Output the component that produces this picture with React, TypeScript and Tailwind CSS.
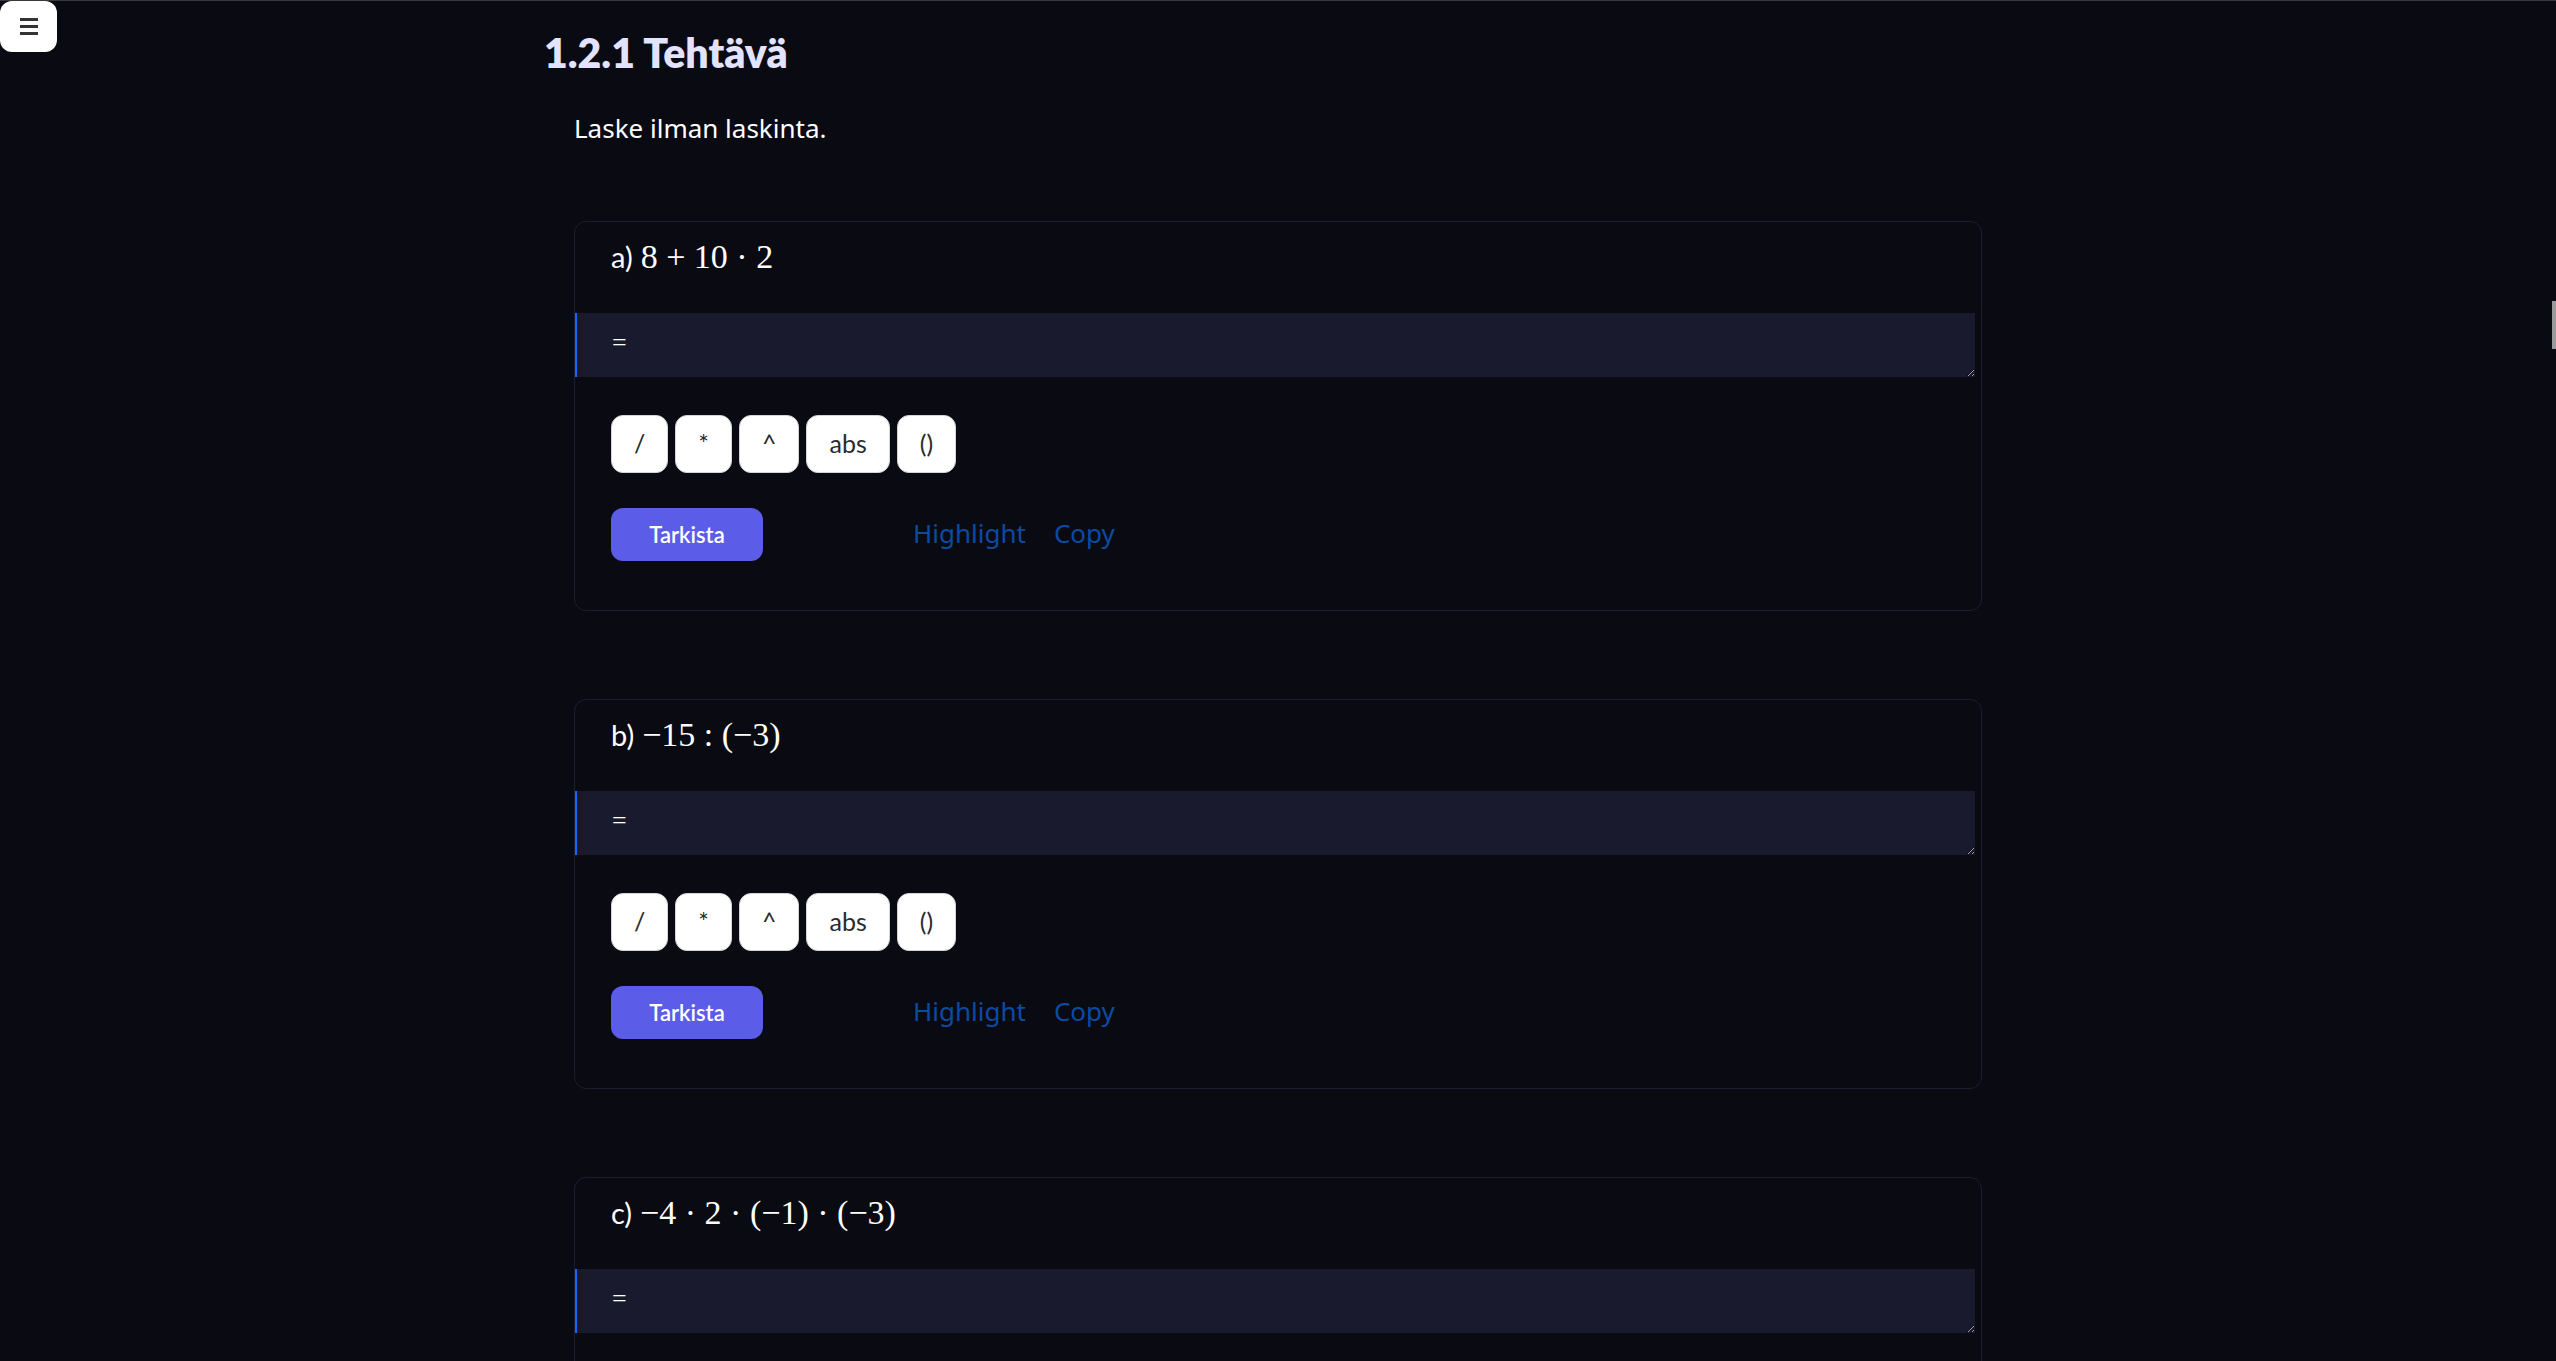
import React from "react";

// ยกเมนูไว้มุมซ้ายบน ลอยทับเนื้อหา
const MenuButton: React.FC = () => (
  <button className="absolute left-0 top-0 flex h-[51px] w-[57px] items-center justify-center rounded-[12px] bg-white">
    <svg width="18" height="18" viewBox="0 0 18 18" fill="#333">
      <rect x="0" y="0" width="18" height="3" />
      <rect x="0" y="7" width="18" height="3" />
      <rect x="0" y="14" width="18" height="3" />
    </svg>
  </button>
);

const keys = ["/", "*", "^", "abs", "()"];

type Task = { label: string; expr: string };

const tasks: Task[] = [
  { label: "a)", expr: "8 + 10 · 2" },
  { label: "b)", expr: "−15 : (−3)" },
  { label: "c)", expr: "−4 · 2 · (−1) · (−3)" },
];

const TaskCard: React.FC<{ task: Task }> = ({ task }) => (
  <div className="mb-[88px] rounded-[12px] border border-[#1d1d30] bg-[#0a0a13]">
    {/* label + expression */}
    <div className="flex items-baseline gap-[8px] pl-[36px] pt-[13px] leading-[44px]">
      <span className="font-['Lato',sans-serif] text-[29px] text-white">
        {task.label}
      </span>
      <span className="font-['Liberation_Serif',serif] text-[34px] text-white">
        {task.expr}
      </span>
    </div>

    {/* answer field */}
    <textarea
      placeholder="="
      className="mt-[34px] block h-[64px] w-[calc(100%-6px)] border-l-2 border-[#1565ff] bg-[#1a1a2e] pl-[35px] pt-[17px] font-['Liberation_Serif',serif] text-[26px] leading-[26px] text-white placeholder:text-white focus:outline-none"
    />

    <div className="px-[36px] pb-[49px]">
      {/* keypad */}
      <div className="mt-[38px] flex gap-[7px]">
        {keys.map((k) => (
          <button
            key={k}
            className="h-[58px] min-w-[53px] rounded-[12px] border border-[#d4d4d4] bg-white px-[22px] font-['Lato',sans-serif] text-[25px] font-normal text-[#2b2b2b]"
          >
            {k}
          </button>
        ))}
      </div>

      {/* actions */}
      <div className="mt-[35px] flex items-center">
        <button className="h-[53px] w-[152px] rounded-[12px] bg-[#5b5ce8] font-['Lato',sans-serif] text-[22px] font-semibold text-white">
          Tarkista
        </button>
        <a
          href="#"
          className="-mt-[3px] ml-[150px] font-['Noto_Sans',sans-serif] text-[26px] text-[#0b4aa2]"
        >
          Highlight
        </a>
        <a
          href="#"
          className="-mt-[3px] ml-[28px] font-['Noto_Sans',sans-serif] text-[26px] text-[#0b4aa2]"
        >
          Copy
        </a>
      </div>
    </div>
  </div>
);

const App: React.FC = () => {
  return (
    <div className="relative h-screen overflow-hidden border-t border-[#3a3a3a] bg-[#0a0a13]">
      <MenuButton />

      {/* scroll marker on the right edge */}
      <div className="absolute right-0 top-[300px] h-[48px] w-[4px] bg-[#9a9a9a]" />

      <main className="mx-auto w-[1468px] pt-[28px]">
        <h1 className="font-['Lato',sans-serif] text-[41px] font-extrabold leading-[48px] text-[#e3e3ff]">
          1.2.1 Tehtävä
        </h1>

        <div className="px-[30px]">
          <p className="mt-[33px] font-['Noto_Sans',sans-serif] text-[26px] leading-[36px] text-white">
            Laske ilman laskinta.
          </p>

          <div className="mt-[75px]">
            {tasks.map((t) => (
              <TaskCard key={t.label} task={t} />
            ))}
          </div>
        </div>
      </main>
    </div>
  );
};

export default App;
